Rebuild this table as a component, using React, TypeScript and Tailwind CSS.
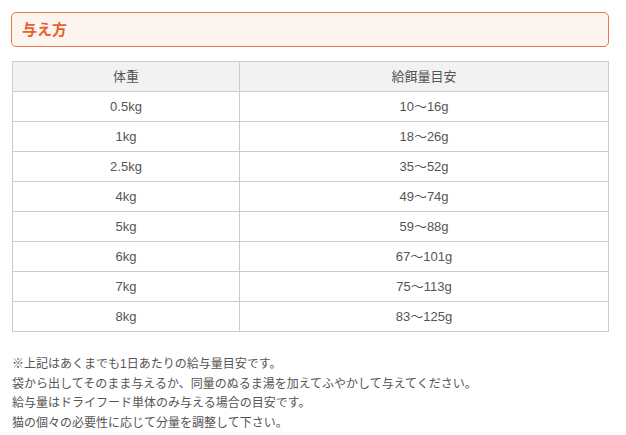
const rows = [
  ['0.5kg', '10～16g'],
  ['1kg', '18～26g'],
  ['2.5kg', '35～52g'],
  ['4kg', '49～74g'],
  ['5kg', '59～88g'],
  ['6kg', '67～101g'],
  ['7kg', '75～113g'],
  ['8kg', '83～125g'],
]

export default function App() {
  return (
    <div
      className="w-[626px] h-[435px] bg-white pt-[12px] pl-[11px] pr-[17px] text-[#555] text-[13px]"
      style={{ fontFamily: '"Liberation Sans", "Noto Sans CJK JP", sans-serif' }}
    >
      {/* heading */}
      <div className="h-[35px] border border-[#e6774c] rounded-[5px] bg-[#fcf4ef] flex items-center pl-[10px]">
        <h2 className="text-[15px] font-bold text-[#e8612c] leading-none">与え方</h2>
      </div>

      {/* table */}
      <table className="mt-[14px] ml-[1px] w-[597px] border-collapse text-center">
        <thead>
          <tr className="bg-[#f3f2f2]">
            <th className="w-[227px] h-[30px] border border-[#ccc] font-normal">体重</th>
            <th className="h-[30px] border border-[#ccc] font-normal">給餌量目安</th>
          </tr>
        </thead>
        <tbody>
          {rows.map(([kg, g]) => (
            <tr key={kg}>
              <td className="h-[30px] border border-[#ccc]">{kg}</td>
              <td className="h-[30px] border border-[#ccc]">{g}</td>
            </tr>
          ))}
        </tbody>
      </table>

      {/* notes */}
      <div className="mt-[23px] ml-[1px] text-[12px] leading-[19.7px]">
        <p>※上記はあくまでも1日あたりの給与量目安です。</p>
        <p>袋から出してそのまま与えるか、同量のぬるま湯を加えてふやかして与えてください。</p>
        <p>給与量はドライフード単体のみ与える場合の目安です。</p>
        <p>猫の個々の必要性に応じて分量を調整して下さい。</p>
      </div>
    </div>
  )
}
